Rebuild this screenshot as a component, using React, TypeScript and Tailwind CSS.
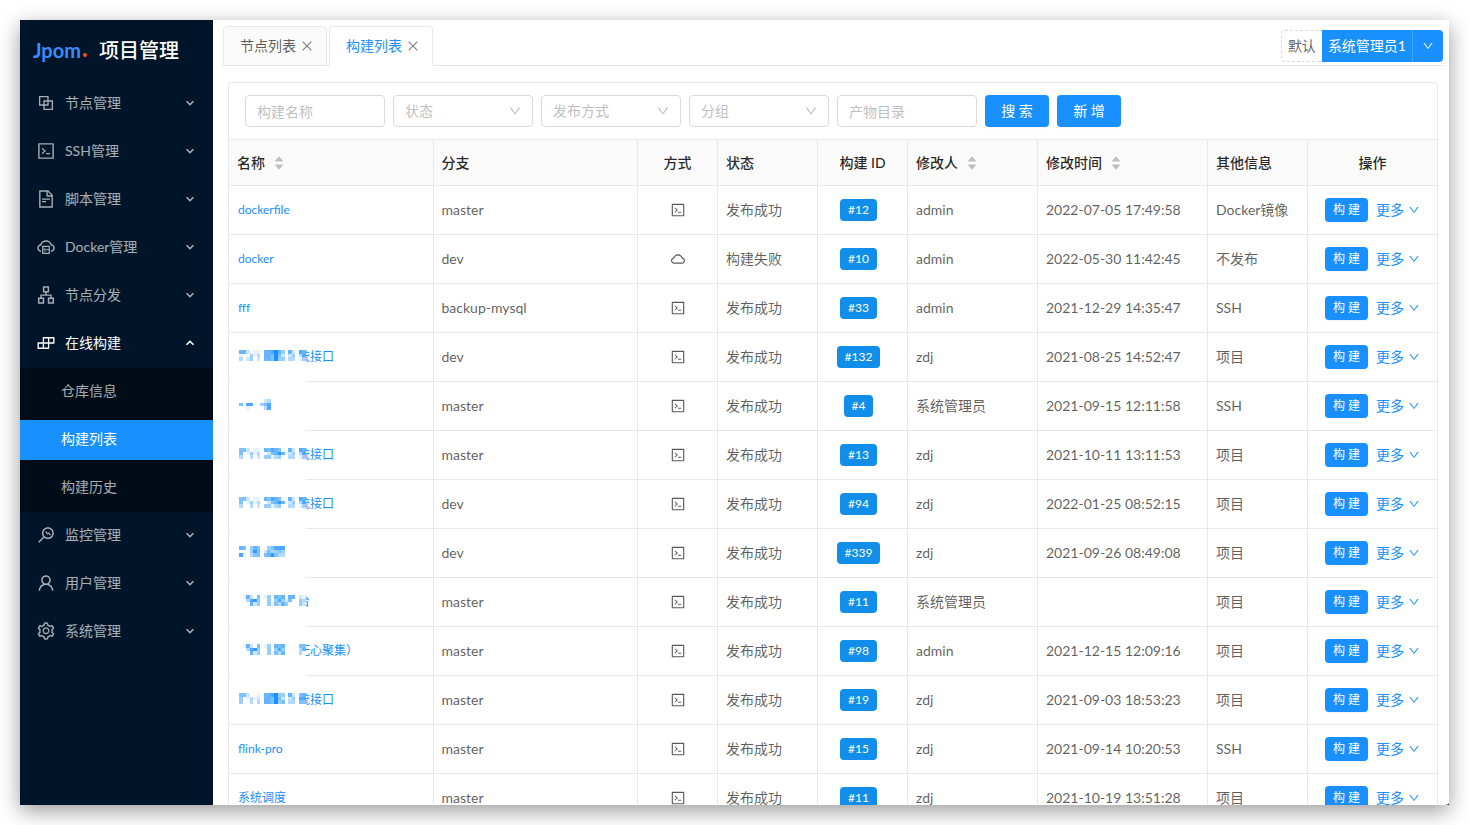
import {useState} from "react";
import type {IconType} from "react-icons";
import {
    AiFillCaretDown,
    AiFillCaretUp,
    AiOutlineApartment,
    AiOutlineBlock,
    AiOutlineBuild,
    AiOutlineClose,
    AiOutlineCloud,
    AiOutlineCloudServer,
    AiOutlineCode,
    AiOutlineDown,
    AiOutlineFileText,
    AiOutlineMonitor,
    AiOutlineSetting,
    AiOutlineUser,
} from "react-icons/ai";

interface MenuItem {
    title: string;
    icon: IconType;
    children?: string[];
}

interface Build {
    name: string;
    // pixelated part of the name, one digit of intensity per block
    mask?: string[];
    branch: string;
    cloud?: boolean;
    status: string;
    buildId: number;
    user: string;
    time: string;
    extra: string;
}

const menus: MenuItem[] = [
    {title: "节点管理", icon: AiOutlineBlock},
    {title: "SSH管理", icon: AiOutlineCode},
    {title: "脚本管理", icon: AiOutlineFileText},
    {title: "Docker管理", icon: AiOutlineCloudServer},
    {title: "节点分发", icon: AiOutlineApartment},
    {title: "在线构建", icon: AiOutlineBuild, children: ["仓库信息", "构建列表", "构建历史"]},
    {title: "监控管理", icon: AiOutlineMonitor},
    {title: "用户管理", icon: AiOutlineUser},
    {title: "系统管理", icon: AiOutlineSetting},
];

const maskA = ["6620110667964062076", "1004130665952024037", "3024020665944033014"];
const maskB = ["0000000230000000000", "5077004570000000000", "0010000370000000000"];
const maskC = ["5520110657650062076", "5014130025686024037", "3003020441340033014"];
const maskD = ["6504650045777000000", "0004850253454000000", "7103550568533000000"];
const maskE = ["0162050140656066021", "0037840040474250043", "0006240041536400042"];
const maskF = ["0162050140656000055", "0037840040474000036", "0006240041536000030"];
const maskG = ["5520010667944062056", "4013120665952024077", "4003030665945033055"];

const builds: Build[] = [
    {name: "dockerfile", branch: "master", status: "发布成功", buildId: 12, user: "admin", time: "2022-07-05 17:49:58", extra: "Docker镜像"},
    {name: "docker", branch: "dev", cloud: true, status: "构建失败", buildId: 10, user: "admin", time: "2022-05-30 11:42:45", extra: "不发布"},
    {name: "fff", branch: "backup-mysql", status: "发布成功", buildId: 33, user: "admin", time: "2021-12-29 14:35:47", extra: "SSH"},
    {name: "统接口", mask: maskA, branch: "dev", status: "发布成功", buildId: 132, user: "zdj", time: "2021-08-25 14:52:47", extra: "项目"},
    {name: "", mask: maskB, branch: "master", status: "发布成功", buildId: 4, user: "系统管理员", time: "2021-09-15 12:11:58", extra: "SSH"},
    {name: "统接口", mask: maskC, branch: "master", status: "发布成功", buildId: 13, user: "zdj", time: "2021-10-11 13:11:53", extra: "项目"},
    {name: "统接口", mask: maskC, branch: "dev", status: "发布成功", buildId: 94, user: "zdj", time: "2022-01-25 08:52:15", extra: "项目"},
    {name: "", mask: maskD, branch: "dev", status: "发布成功", buildId: 339, user: "zdj", time: "2021-09-26 08:49:08", extra: "项目"},
    {name: "台", mask: maskE, branch: "master", status: "发布成功", buildId: 11, user: "系统管理员", time: "", extra: "项目"},
    {name: "无心聚集）", mask: maskF, branch: "master", status: "发布成功", buildId: 98, user: "admin", time: "2021-12-15 12:09:16", extra: "项目"},
    {name: "统接口", mask: maskG, branch: "master", status: "发布成功", buildId: 19, user: "zdj", time: "2021-09-03 18:53:23", extra: "项目"},
    {name: "flink-pro", branch: "master", status: "发布成功", buildId: 15, user: "zdj", time: "2021-09-14 10:20:53", extra: "SSH"},
    {name: "系统调度", branch: "master", status: "发布成功", buildId: 11, user: "zdj", time: "2021-10-19 13:51:28", extra: "项目"},
];

const columns = [
    {title: "名称", width: "", sorter: true},
    {title: "分支", width: ""},
    {title: "方式", width: "w-20", center: true},
    {title: "状态", width: "w-[100px]"},
    {title: "构建 ID", width: "w-[90px]", center: true},
    {title: "修改人", width: "w-[130px]", sorter: true},
    {title: "修改时间", width: "w-[170px]", sorter: true},
    {title: "其他信息", width: "w-[100px]"},
    {title: "操作", width: "w-[130px]", center: true},
];

function Mosaic({rows}: { rows: string[] }) {
    return (
        <svg className="w-[67px] h-[11px]" viewBox="0 0 19 3" preserveAspectRatio="none" shapeRendering="crispEdges" aria-hidden="true">
            {rows.map((row, y) =>
                row.split("").map((level, x) =>
                    level === "0" ? null : (
                        <rect key={`${x}-${y}`} x={x} y={y} width={1} height={1} fill="#1890ff" fillOpacity={Number(level) / 9}/>
                    )
                )
            )}
        </svg>
    );
}

function Sidebar() {
    const [selected, setSelected] = useState("构建列表");
    const [opened, setOpened] = useState("在线构建");

    return (
        <aside className="w-[193px] shrink-0 bg-[#001529] text-white/65">
            <div className="h-15 flex items-center pl-[13px] gap-3 text-white">
                <span className="flex items-end text-[20px] leading-6 font-bold text-[#3b8cff]">
                    Jpom
                    <span className="size-1 mb-[5px] ml-[2px] rounded-full bg-[#ff4d13]"/>
                </span>
                <h1 className="text-[20px] font-medium">项目管理</h1>
            </div>
            <nav>
                {menus.map((menu) => {
                    const open = opened === menu.title;
                    return (
                        <div key={menu.title}>
                            <button
                                type="button"
                                onClick={() => setOpened(open ? "" : menu.title)}
                                className={`w-full h-12 pb-[2px] pl-4 pr-[18px] flex items-center text-sm ${open ? "text-white" : ""}`}
                            >
                                <menu.icon className="size-5 mr-[9px]"/>
                                <span className="flex-1 text-left">{menu.title}</span>
                                <svg className={`size-[10px] ${open ? "rotate-180" : ""}`} viewBox="0 0 10 10" fill="none" stroke="currentColor" strokeWidth="1.5">
                                    <path d="M1.5 3.2 5 6.6 8.5 3.2"/>
                                </svg>
                            </button>
                            {open && menu.children && (
                                <ul className="bg-[#000c17] py-1">
                                    {menu.children.map((child) => (
                                        <li key={child} className="mb-2 last:mb-0">
                                            <button
                                                type="button"
                                                onClick={() => setSelected(child)}
                                                className={`w-full h-10 pb-[2px] pl-[41px] text-left text-sm ${selected === child ? "bg-[#1890ff] text-white" : ""}`}
                                            >
                                                {child}
                                            </button>
                                        </li>
                                    ))}
                                </ul>
                            )}
                        </div>
                    );
                })}
            </nav>
        </aside>
    );
}

function Tabs() {
    const [active, setActive] = useState("构建列表");

    return (
        <div className="h-[46px] flex items-end justify-between border-b border-[#e8e8e8]">
            <div className="flex gap-[2px] -mb-px">
                {["节点列表", "构建列表"].map((tab) => (
                    <div
                        key={tab}
                        className={`h-10 pl-4 pr-3 flex items-center gap-1 rounded-t border border-[#e8e8e8] ${
                            active === tab ? "bg-white border-b-white text-[#1890ff]" : "bg-[#fafafa] text-black/65"
                        }`}
                    >
                        <button type="button" onClick={() => setActive(tab)} className="text-sm">{tab}</button>
                        <button type="button" aria-label={`关闭${tab}`} className="text-black/50">
                            <AiOutlineClose className="size-[14px]"/>
                        </button>
                    </div>
                ))}
            </div>
            <div className="h-8 mb-[3px] flex text-sm">
                <button type="button" className="px-[6px] rounded-l border border-r-0 border-dashed border-[#d9d9d9] text-black/65">默认</button>
                <button type="button" className="px-[6px] bg-[#1890ff] text-white">系统管理员1</button>
                <button type="button" aria-label="用户菜单" className="w-[31px] flex items-center justify-center rounded-r border-l border-[#40a9ff] bg-[#1890ff] text-white">
                    <AiOutlineDown className="size-3"/>
                </button>
            </div>
        </div>
    );
}

function FilterInput({label}: { label: string }) {
    return (
        <input
            type="text"
            aria-label={label}
            placeholder={label}
            className="w-[140px] h-8 px-[11px] rounded border border-[#d9d9d9] text-sm placeholder:text-[#bfbfbf] outline-none"
        />
    );
}

function FilterSelect({label}: { label: string }) {
    return (
        <div className="relative">
            <select aria-label={label} className="w-[140px] h-8 px-[11px] appearance-none rounded border border-[#d9d9d9] bg-white text-sm text-[#bfbfbf] outline-none">
                <option>{label}</option>
            </select>
            <AiOutlineDown className="absolute right-[11px] top-[9px] size-[14px] text-[#bfbfbf] pointer-events-none"/>
        </div>
    );
}

function BuildRow({build}: { build: Build }) {
    const cell = "h-[49px] px-2 border-b border-r border-[#e8e8e8] whitespace-nowrap";

    return (
        <tr>
            <td className={`${cell} relative text-xs`}>
                <a href="#" className={`text-[#1890ff] ${build.mask ? "ml-[61px]" : "ml-px"}`}>{build.name}</a>
                {build.mask && (
                    <div className={`absolute left-px top-0 w-[76px] bg-white pl-[9px] pt-[17px] ${build.mask === maskG ? "h-12" : "h-[49px]"}`}>
                        <Mosaic rows={build.mask}/>
                    </div>
                )}
            </td>
            <td className={cell}>{build.branch}</td>
            <td className={cell}>
                {build.cloud ? <AiOutlineCloud className="size-4 mx-auto"/> : <AiOutlineCode className="size-4 mx-auto"/>}
            </td>
            <td className={cell}>{build.status}</td>
            <td className={`${cell} text-center`}>
                <span className="inline-block h-[22px] mr-2 px-2 rounded bg-[#108ee9] text-xs leading-[22px] text-white">#{build.buildId}</span>
            </td>
            <td className={cell}>{build.user}</td>
            <td className={cell}>{build.time}</td>
            <td className={cell}>{build.extra}</td>
            <td className={cell}>
                <div className="flex items-center justify-center gap-2">
                    <button type="button" className="h-6 px-2 rounded bg-[#1890ff] text-xs text-white shadow-xs">构 建</button>
                    <button type="button" className="flex items-center gap-1 text-[#1890ff]">
                        更多
                        <AiOutlineDown className="size-3"/>
                    </button>
                </div>
            </td>
        </tr>
    );
}

function App() {
    return (
        <div className="h-screen p-5 bg-white font-[Lato,'Noto_Sans_CJK_SC',sans-serif]">
            <div className="relative h-full flex overflow-hidden bg-white shadow-[0_6px_20px_rgba(0,0,0,0.4)]">
                <Sidebar/>
                <main className="flex-1 min-w-0 pl-[10px] pr-[6px]">
                    <Tabs/>
                    <div className="mt-4 ml-[5px] mr-[5px] rounded-t border-t border-l border-[#e8e8e8]">
                        <form className="flex gap-2 px-4 py-3 border-r border-[#e8e8e8] rounded-tr" onSubmit={(e) => e.preventDefault()}>
                            <FilterInput label="构建名称"/>
                            <FilterSelect label="状态"/>
                            <FilterSelect label="发布方式"/>
                            <FilterSelect label="分组"/>
                            <FilterInput label="产物目录"/>
                            <button type="submit" className="w-16 h-8 rounded bg-[#1890ff] text-sm text-white shadow-xs">搜 索</button>
                            <button type="button" className="w-16 h-8 rounded bg-[#1890ff] text-sm text-white shadow-xs">新 增</button>
                        </form>
                        <table className="w-full table-fixed border-separate border-spacing-0 border-t border-[#e8e8e8] text-sm text-black/65">
                            <thead>
                                <tr>
                                    {columns.map((col) => (
                                        <th
                                            key={col.title}
                                            className={`${col.width} h-[46px] px-2 bg-[#fafafa] border-b border-r border-[#e8e8e8] font-medium text-black/85 ${
                                                col.center ? "text-center" : "text-left"
                                            }`}
                                        >
                                            <span className={`flex items-center ${col.center ? "justify-center" : ""}`}>
                                                {col.title}
                                                {col.sorter && (
                                                    <span className="ml-2 flex flex-col text-[#bfbfbf]">
                                                        <AiFillCaretUp className="size-3 -mb-[4px]"/>
                                                        <AiFillCaretDown className="size-3"/>
                                                    </span>
                                                )}
                                            </span>
                                        </th>
                                    ))}
                                </tr>
                            </thead>
                            <tbody>
                                {builds.map((build, index) => (
                                    <BuildRow key={index} build={build}/>
                                ))}
                            </tbody>
                        </table>
                    </div>
                </main>
                <svg className="absolute right-0 bottom-0 w-[5px] h-[2px]" viewBox="0 0 5 2" aria-hidden="true">
                    <path d="M0 2Q4 2 5 0V2Z" fill="#222"/>
                </svg>
            </div>
        </div>
    );
}

export default App;
